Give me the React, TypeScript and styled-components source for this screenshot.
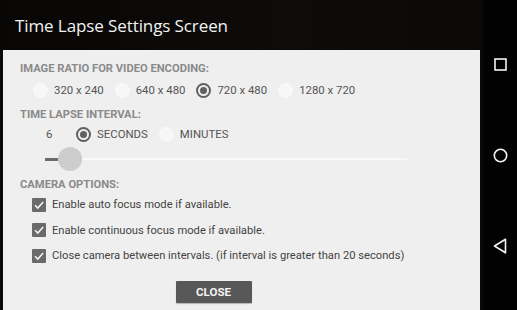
import React from "react";
import styled, { createGlobalStyle } from "styled-components";

const Global = createGlobalStyle`
  html, body { margin: 0; padding: 0; background: #0b0908; }
  * { box-sizing: border-box; }
`;

const Screen = styled.div`
  width: 517px;
  height: 310px;
  display: flex;
  overflow: hidden;
  background: #0b0908;
`;

const Main = styled.div`
  flex: 1;
  display: flex;
  flex-direction: column;
`;

const Header = styled.div`
  height: 50px;
  padding: 14px 0 0 15px;
  font-family: "Open Sans", sans-serif;
  font-size: 17px;
  color: #f2f2f2;
  letter-spacing: -0.1px;
  background: linear-gradient(90deg, #080706 0%, #0e0b09 60%, #0b0908 100%);
`;

const Body = styled.div`
  flex: 1;
  padding-left: 3px;
  padding-right: 3px;
  display: flex;
`;

const Panel = styled.div`
  flex: 1;
  background: #efefef;
  padding: 12px 0 0 17px;
  font-family: Roboto, "Liberation Sans", sans-serif;
  display: flex;
  flex-direction: column;
`;

const Label = styled.div<{ $top?: number }>`
  font-size: 11.2px;
  font-weight: 700;
  color: #8a8a8a;
  height: 14px;
  line-height: 14px;
  margin-top: ${(p) => p.$top ?? 0}px;
`;

const Row = styled.div<{ $indent: number; $gap: number; $top: number }>`
  display: flex;
  align-items: center;
  padding-left: ${(p) => p.$indent}px;
  gap: ${(p) => p.$gap}px;
  height: 24px;
  margin-top: ${(p) => p.$top}px;
`;

const RadioItem = styled.div`
  display: flex;
  align-items: center;
  gap: 6px;
`;

const RadioCircle = styled.span<{ $on?: boolean }>`
  width: 15px;
  height: 15px;
  border-radius: 50%;
  display: inline-flex;
  align-items: center;
  justify-content: center;
  border: 2px solid ${(p) => (p.$on ? "#606060" : "#f8f8f8")};
  background: ${(p) => (p.$on ? "#efefef" : "#f7f7f7")};
  &::after {
    content: "";
    width: 7px;
    height: 7px;
    border-radius: 50%;
    background: ${(p) => (p.$on ? "#606060" : "transparent")};
  }
`;

const ItemText = styled.span`
  font-size: 11.4px;
  color: #555;
`;

const Value = styled.span`
  font-size: 11.4px;
  color: #555;
  width: 45px;
  padding-left: 26px;
`;

const SliderRow = styled.div`
  display: flex;
  align-items: center;
  height: 26px;
  padding-left: 25px;
  margin-bottom: 6px;
`;

const TrackDone = styled.span`
  width: 13px;
  height: 3px;
  background: #6b6b6b;
`;

const Thumb = styled.span`
  width: 24px;
  height: 24px;
  border-radius: 50%;
  background: #cdcdcd;
`;

const TrackRest = styled.span`
  width: 325px;
  height: 2px;
  background: #f9f9f9;
`;

const Checks = styled.div`
  display: flex;
  flex-direction: column;
`;

const CheckRow = styled.div`
  display: flex;
  align-items: center;
  gap: 6px;
  padding-left: 12px;
  height: 25.5px;
`;

const Box = styled.span`
  width: 14px;
  height: 14px;
  border-radius: 1px;
  background: #6a6a6a;
  display: inline-flex;
  align-items: center;
  justify-content: center;
`;

const CheckText = styled.span`
  font-size: 11.2px;
  color: #444;
`;

const Footer = styled.div`
  display: flex;
  justify-content: center;
  padding-right: 73px;
  margin-top: 12.5px;
`;

const CloseButton = styled.button`
  width: 76px;
  height: 22px;
  border: none;
  border-radius: 1px;
  background: #585858;
  color: #f4f4f4;
  font-family: Roboto, "Liberation Sans", sans-serif;
  font-weight: 700;
  font-size: 11.5px;
  padding: 0;
  box-shadow: 0 1px 1px rgba(0, 0, 0, 0.25);
`;

const Nav = styled.div`
  width: 34px;
  background: #020202;
  display: flex;
  flex-direction: column;
  align-items: center;
  padding-top: 58px;
`;

const NavSlot = styled.div<{ $h: number }>`
  height: ${(p) => p.$h}px;
  display: flex;
  justify-content: center;
  align-items: flex-start;
`;

const Check = () => (
  <svg width="12" height="12" viewBox="0 0 12 12">
    <path d="M2 6.2 L4.8 9 L10.2 3" fill="none" stroke="#f2f2f2" strokeWidth="1.6" />
  </svg>
);

const Radio = ({ on, label }: { on?: boolean; label: string }) => (
  <RadioItem>
    <RadioCircle $on={on} />
    <ItemText>{label}</ItemText>
  </RadioItem>
);

export default function App() {
  return (
    <Screen>
      <Global />
      <Main>
        <Header>Time Lapse Settings Screen</Header>
        <Body>
          <Panel>
            <Label>IMAGE RATIO FOR VIDEO ENCODING:</Label>
            <Row $indent={13} $gap={11} $top={2}>
              <Radio label="320 x 240" />
              <Radio label="640 x 480" />
              <Radio on label="720 x 480" />
              <Radio label="1280 x 720" />
            </Row>
            <Label $top={6}>TIME LAPSE INTERVAL:</Label>
            <Row $indent={0} $gap={11} $top={0}>
              <Value>6</Value>
              <Radio on label="SECONDS" />
              <Radio label="MINUTES" />
            </Row>
            <SliderRow>
              <TrackDone />
              <Thumb />
              <TrackRest />
            </SliderRow>
            <Label>CAMERA OPTIONS:</Label>
            <Checks>
              <CheckRow>
                <Box><Check /></Box>
                <CheckText>Enable auto focus mode if available.</CheckText>
              </CheckRow>
              <CheckRow>
                <Box><Check /></Box>
                <CheckText>Enable continuous focus mode if available.</CheckText>
              </CheckRow>
              <CheckRow>
                <Box><Check /></Box>
                <CheckText>Close camera between intervals. (if interval is greater than 20 seconds)</CheckText>
              </CheckRow>
            </Checks>
            <Footer>
              <CloseButton>CLOSE</CloseButton>
            </Footer>
          </Panel>
        </Body>
      </Main>
      <Nav>
        <NavSlot $h={90}>
          <svg width="13" height="13" viewBox="0 0 13 13">
            <rect x="1" y="1" width="11" height="11" fill="none" stroke="#f4f4f4" strokeWidth="1.6" />
          </svg>
        </NavSlot>
        <NavSlot $h={90}>
          <svg width="15" height="15" viewBox="0 0 15 15">
            <circle cx="7.5" cy="7.5" r="6.2" fill="none" stroke="#f4f4f4" strokeWidth="1.6" />
          </svg>
        </NavSlot>
        <NavSlot $h={30}>
          <svg width="14" height="16" viewBox="0 0 14 16">
            <path d="M12.5 1.2 L1.5 8 L12.5 14.8 Z" fill="none" stroke="#f4f4f4" strokeWidth="1.6" strokeLinejoin="round" />
          </svg>
        </NavSlot>
      </Nav>
    </Screen>
  );
}
